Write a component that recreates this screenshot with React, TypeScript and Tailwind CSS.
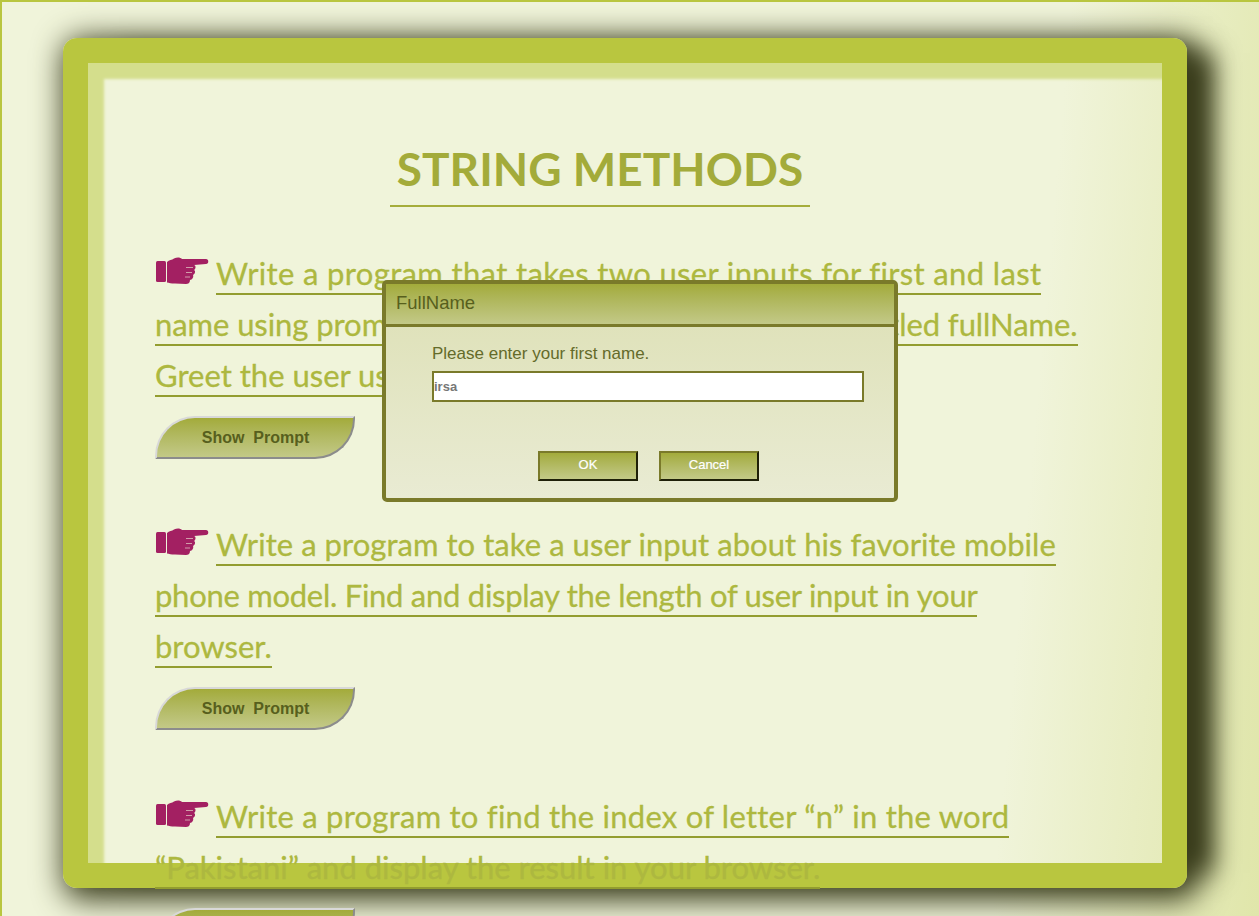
const comic = 'font-["Comic_Sans_MS","Lato","Noto_Sans",sans-serif]';

interface QuestionLine {
  text: string;
  tracking: string;
}

function PointingHand() {
  return (
    <svg width="54" height="28" viewBox="0 0 54 28" className="mr-[7px] inline-block align-[0px]" fill="#a32062">
      <rect x="1" y="4" width="10" height="21" rx="1.5" />
      <path d="M12 5 C14 3 17 3 19 1.500 C22 0 25 0 27 2 L51 2 C54 2 54 7 51 7 L39 8 C41 8 41 12 39 13 C41 14 40 17 38 18 C39 20 37 23 35 23 C35 26 33 27 31 27 L20 26.500 C16 26.500 14 26 12 25.500 Z" />
      <path d="M31 10.500 L38 10.500 M31 15.500 L37 15.500 M30 20 L35 20" stroke="#f0f4da" strokeWidth="0.6" fill="none" />
    </svg>
  );
}

function ShowPrompt({ className = '' }: { className?: string }) {
  return (
    <button className={`block h-[43px] w-[200px] rounded-tl-[40px] rounded-br-[40px] border-2 border-t-[#d8d8d8] border-l-[#d8d8d8] border-r-[#8c8c8c] border-b-[#8c8c8c] bg-gradient-to-b from-[#a3ab3a] to-[#c3c987] pl-[1px] font-['Liberation_Sans',sans-serif] text-base font-bold whitespace-pre text-[#575f1d] ${className}`}>
      {'Show  Prompt'}
    </button>
  );
}

function Question({ lines, className = '' }: { lines: QuestionLine[]; className?: string }) {
  return (
    <p className={`text-[31px] leading-[51px] text-[#adb83f] [-webkit-text-stroke:0.3px_#adb83f] ${className}`}>
      <PointingHand />
      <span className="border-b-2 border-[#939d2f] pb-[1px]">
        {lines.map((line, i) => (
          <span key={i} className={line.tracking}>
            {line.text}
            {i < lines.length - 1 && <br />}
          </span>
        ))}
      </span>
    </p>
  );
}

function PromptDialog() {
  return (
    <div className="absolute top-[278px] left-[380px] w-[516px] h-[222px] rounded-[5px] border-4 border-[#7a7a2a] bg-gradient-to-b from-[#dde0b5] to-[#e9ebd3] font-['Liberation_Sans',sans-serif]">
      <div className="h-[43px] border-b-[3px] border-[#7a7a2a] bg-gradient-to-b from-[#a3ab3a] to-[#c3c987] px-[10px] pt-[7px] text-[18.5px] leading-[24px] text-[#575f1d]">
        FullName
      </div>
      <div className="px-[46px] pt-[17px]">
        <div className="text-[17px] leading-[20px] text-[#646b2a]">Please enter your first name.</div>
        <div className="mt-[7px] h-[31px] w-[432px] border-2 border-[#7a7a2a] bg-white text-[13px] leading-[27px] font-bold text-[#777777]">
          irsa
        </div>
        <div className="mt-[49px] flex gap-[21px] pl-[106px]">
          <button className="h-[30px] w-[100px] border-2 border-t-[#7a7a2a] border-l-[#7a7a2a] border-r-[#1f2008] border-b-[#1f2008] bg-gradient-to-b from-[#a3ab3a] to-[#c3c987] pb-[2px] text-[13px] text-white [-webkit-text-stroke:0.2px_white]">
            OK
          </button>
          <button className="h-[30px] w-[100px] border-2 border-t-[#7a7a2a] border-l-[#7a7a2a] border-r-[#1f2008] border-b-[#1f2008] bg-gradient-to-b from-[#a3ab3a] to-[#c3c987] pb-[2px] text-[13px] text-white [-webkit-text-stroke:0.2px_white]">
            Cancel
          </button>
        </div>
      </div>
    </div>
  );
}

export default function App() {
  return (
    <div className={`relative h-[916px] overflow-hidden border-t-2 border-l-2 border-[#b9c63f] bg-[linear-gradient(95deg,#f0f4da_0%,#f0f4da_80%,#e0e6aa_100%)] pt-[36px] pl-[61px] ${comic}`}>
      <div className="h-[850px] w-[1124px] rounded-[14px] border-[25px] border-[#b9c63f] shadow-[inset_16px_16px_3px_0_#d4de8c,41px_0_25px_-15px_#3a3d1c,6px_6px_30px_6px_#3a3d1c]">
        <div className="pt-[81px] pl-[67px]">
          <div className="ml-[235px] w-[420px] border-b-2 border-[#a5ad3b] pb-[11px] text-center text-[46px] leading-[50px] font-bold text-[#a3ab3a]">
            STRING METHODS
          </div>
          <Question
            className="mt-[41px]"
            lines={[
              { text: 'Write a program that takes two user inputs for first and last', tracking: 'tracking-[0.36px]' },
              { text: 'name using prompts. Concatenate them in a variable titled fullName.', tracking: 'tracking-[-0.07px]' },
              { text: 'Greet the user using an alert.', tracking: 'tracking-normal' },
            ]}
          />
          <ShowPrompt className="mt-[15px]" />
          <Question
            className="mt-[60px]"
            lines={[
              { text: 'Write a program to take a user input about his favorite mobile', tracking: 'tracking-[0.05px]' },
              { text: 'phone model. Find and display the length of user input in your', tracking: 'tracking-[-0.27px]' },
              { text: 'browser.', tracking: 'tracking-normal' },
            ]}
          />
          <ShowPrompt className="mt-[15px]" />
          <Question
            className="mt-[61px]"
            lines={[
              { text: 'Write a program to find the index of letter “n” in the word', tracking: 'tracking-[0.24px]' },
              { text: '“Pakistani” and display the result in your browser.', tracking: 'tracking-normal' },
            ]}
          />
          <ShowPrompt className="mt-[15px]" />
        </div>
      </div>
      <PromptDialog />
    </div>
  );
}
